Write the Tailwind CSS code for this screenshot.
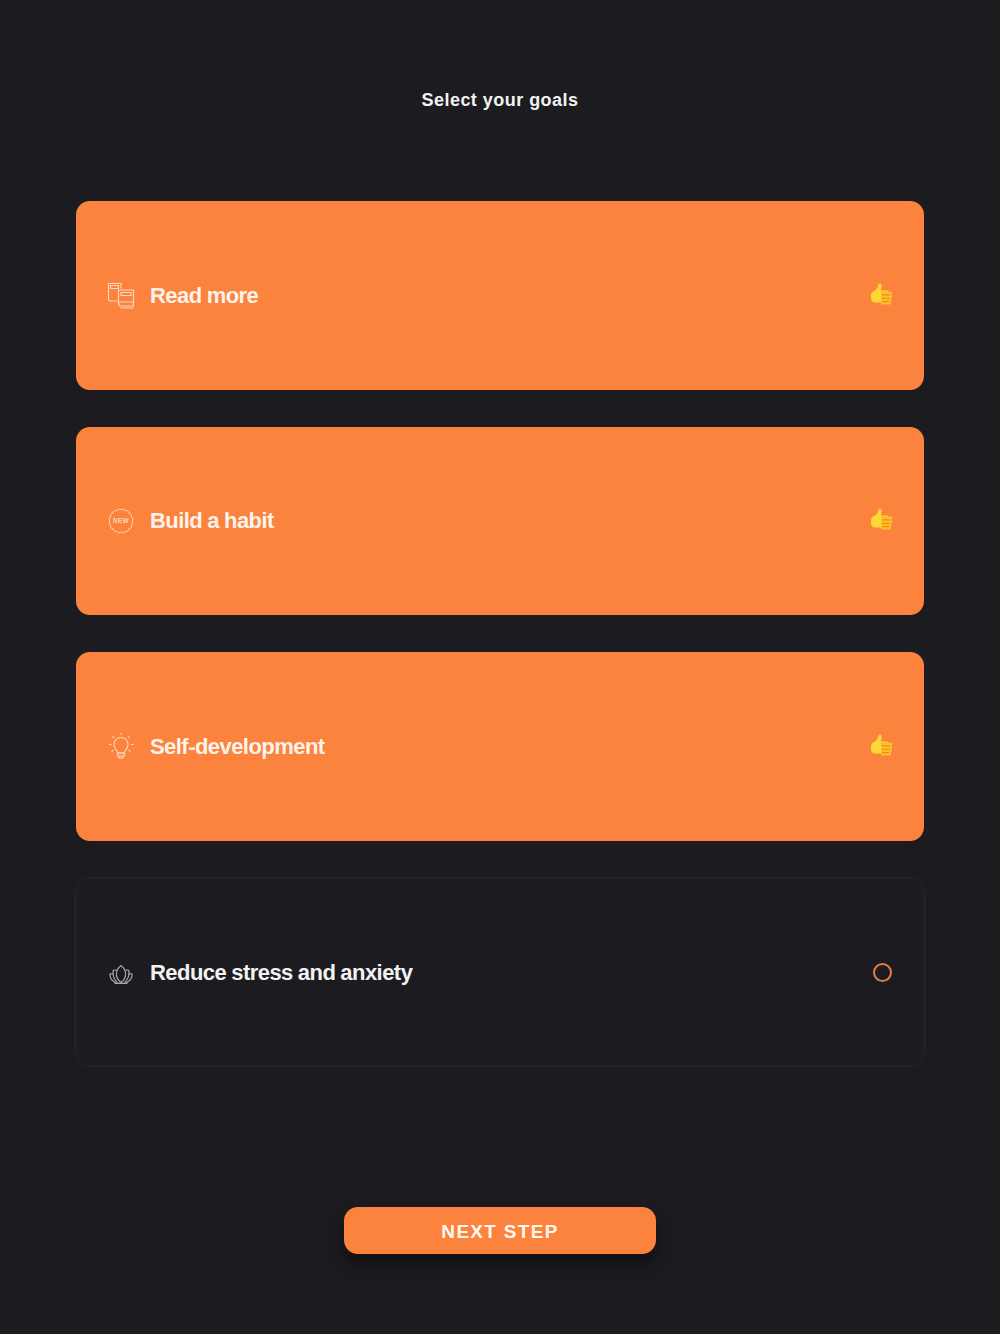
<!DOCTYPE html>
<html lang="en">
<head>
  <meta charset="UTF-8" />
  <meta name="viewport" content="width=device-width, initial-scale=1.0"/>
  <title>Select your goals</title>
  <script src="https://cdn.jsdelivr.net/npm/@tailwindcss/browser@4"></script>
</head>
<body class="bg-[#1c1c20] font-['Liberation_Sans',sans-serif] text-white">
  <main class="w-[1000px] h-[1334px] overflow-hidden flex flex-col items-center">
    <h1 class="mt-[89px] h-[22px] leading-[22px] text-[18px] font-bold tracking-[0.47px] text-[#f2f2f2]">Select your goals</h1>

    <section class="mt-[90px] w-[848px] flex flex-col gap-[37px]">
      <!-- Read more -->
      <div class="h-[188.5px] rounded-[14px] bg-[#fc833d] px-[32px] flex items-center">
        <svg class="w-[28px] h-[28px] -ml-[1px]" viewBox="0 0 28 28" fill="none" stroke="#fbd9bf" stroke-width="1.1">
          <path d="M1.500 2.500h12.500v5M1.500 2.500v15.500a2 2 0 0 0 2 2h7"/>
          <path d="M3.500 4.500h8v3h-8z"/>
          <path d="M11.500 9h15v16h-13a2 2 0 0 1-2-2z"/>
          <path d="M14 11.500h10v3h-10z"/>
          <path d="M11.500 23a2 2 0 0 1 2-2h13M13.500 27h13"/>
        </svg>
        <span class="ml-[15px] text-[22px] font-bold tracking-[-0.55px] [word-spacing:-0.5px] text-[#fdf3ea]">Read more</span>
        <svg class="ml-auto -mt-[3px] w-[22px] h-[22px]" viewBox="0 0 22 22">
          <path d="M1 12c0-2 1-3 3-4 2-1 3.500-2.500 4-5 .3-1.500 1-2.500 2-2.500 1.500 0 2 2 1.500 4l-.5 3h7v12H6c-3 0-5-1.500-5-4z" fill="#fdd835"/>
          <path d="M11 8.500h9.500a1.700 1.700 0 0 1 0 3.400a1.700 1.700 0 0 1 0 3.400a1.700 1.700 0 0 1-.5 3.300a1.500 1.500 0 0 1-1 2.900h-8" fill="#fbc02d"/>
          <path d="M12 11.900h8M12 15.300h8M12 18.600h7" stroke="#f57c00" stroke-width="0.9"/>
        </svg>
      </div>

      <!-- Build a habit -->
      <div class="h-[188.5px] rounded-[14px] bg-[#fc833d] px-[32px] flex items-center">
        <div class="relative w-[26px] h-[26px] flex items-center justify-center">
          <svg class="absolute inset-0 w-[26px] h-[26px]" viewBox="0 0 26 26" fill="none" stroke="#fbd9bf" stroke-width="1">
            <path d="M24 13A2.400 2.400 0 0 0 23.160 8.790A2.400 2.400 0 0 0 20.780 5.220A2.400 2.400 0 0 0 17.210 2.840A2.400 2.400 0 0 0 13 2A2.400 2.400 0 0 0 8.790 2.840A2.400 2.400 0 0 0 5.220 5.220A2.400 2.400 0 0 0 2.840 8.790A2.400 2.400 0 0 0 2 13A2.400 2.400 0 0 0 2.840 17.210A2.400 2.400 0 0 0 5.220 20.780A2.400 2.400 0 0 0 8.790 23.160A2.400 2.400 0 0 0 13 24A2.400 2.400 0 0 0 17.210 23.160A2.400 2.400 0 0 0 20.780 20.780A2.400 2.400 0 0 0 23.160 17.210A2.400 2.400 0 0 0 24 13z"/>
          </svg>
          <span class="relative text-[6.5px] font-bold leading-none tracking-[0.3px] text-[#fbd9bf]">NEW</span>
        </div>
        <span class="ml-[16px] text-[22px] font-bold tracking-[-0.55px] [word-spacing:-0.5px] text-[#fdf3ea]">Build a habit</span>
        <svg class="ml-auto -mt-[3px] w-[22px] h-[22px]" viewBox="0 0 22 22">
          <path d="M1 12c0-2 1-3 3-4 2-1 3.500-2.500 4-5 .3-1.500 1-2.500 2-2.500 1.500 0 2 2 1.500 4l-.5 3h7v12H6c-3 0-5-1.500-5-4z" fill="#fdd835"/>
          <path d="M11 8.500h9.500a1.700 1.700 0 0 1 0 3.400a1.700 1.700 0 0 1 0 3.400a1.700 1.700 0 0 1-.5 3.300a1.500 1.500 0 0 1-1 2.900h-8" fill="#fbc02d"/>
          <path d="M12 11.900h8M12 15.300h8M12 18.600h7" stroke="#f57c00" stroke-width="0.9"/>
        </svg>
      </div>

      <!-- Self-development -->
      <div class="h-[188.5px] rounded-[14px] bg-[#fc833d] px-[32px] flex items-center">
        <svg class="w-[26px] h-[26px]" viewBox="0 0 26 26" fill="none" stroke="#fbd9bf" stroke-width="1.1">
          <path d="M9.500 20c0-3-3.500-4.500-3.500-8.500a7 7 0 0 1 14 0c0 4-3.500 5.500-3.500 8.500z"/>
          <path d="M9.500 20h7v3h-7zM11 23v2h4v-2"/>
          <path d="M13 0v2M4.500 3.500l1.500 1.500M21.500 3.500l-1.500 1.500M1 11.500h2.500M23 11.500h2.500M3.500 18.500l2-1.500M22.500 18.500l-2-1.500"/>
        </svg>
        <span class="ml-[16px] text-[22px] font-bold tracking-[-0.55px] [word-spacing:-0.5px] text-[#fdf3ea]">Self-development</span>
        <svg class="ml-auto -mt-[3px] w-[22px] h-[22px]" viewBox="0 0 22 22">
          <path d="M1 12c0-2 1-3 3-4 2-1 3.500-2.500 4-5 .3-1.500 1-2.500 2-2.500 1.500 0 2 2 1.500 4l-.5 3h7v12H6c-3 0-5-1.500-5-4z" fill="#fdd835"/>
          <path d="M11 8.500h9.500a1.700 1.700 0 0 1 0 3.400a1.700 1.700 0 0 1 0 3.400a1.700 1.700 0 0 1-.5 3.300a1.500 1.500 0 0 1-1 2.900h-8" fill="#fbc02d"/>
          <path d="M12 11.900h8M12 15.300h8M12 18.600h7" stroke="#f57c00" stroke-width="0.9"/>
        </svg>
      </div>

      <!-- Reduce stress and anxiety -->
      <div class="-mt-[0.5px] -mx-px h-[190px] rounded-[15px] border border-[#27272c] bg-[#1c1c20] px-[32px] flex items-center">
        <svg class="ml-[1px] mr-[1px] w-[24px] h-[22px] mt-[6px]" viewBox="0 0 26 22" fill="none" stroke="#a9a9ad" stroke-width="1.3">
          <path d="M13 1c-3 2-5 5-5 9 0 4 2 7 5 9 3-2 5-5 5-9 0-4-2-7-5-9z"/>
          <path d="M8 6C6.500 5.500 5 5.500 4.500 6c-.5 4 0 9 4.500 13M18 6c1.500-.5 3-.5 3.500 0 .5 4 0 9-4.500 13"/>
          <path d="M4.500 10C3 9.500 2 9.500 1 10c0 4 2 8 7 9.500M21.500 10c1.500-.5 2.500-.5 3.500 0 0 4-2 8-7 9.500"/>
          <path d="M6 20h14" stroke-width="1.500"/>
        </svg>
        <span class="ml-[16px] text-[22px] font-bold tracking-[-0.55px] [word-spacing:-0.5px] text-[#f2f2f2]">Reduce stress and anxiety</span>
        <span class="ml-auto w-[19px] h-[19px] rounded-full border-2 border-[#e07f45]"></span>
      </div>
    </section>

    <button class="mt-[140px] w-[312px] h-[47px] pt-[3px] rounded-[14px] bg-[#fc833d] text-[19px] font-bold tracking-[1.3px] text-[#fff8f2] shadow-[0_10px_18px_rgba(0,0,0,0.45)]">NEXT STEP</button>
  </main>
</body>
</html>
